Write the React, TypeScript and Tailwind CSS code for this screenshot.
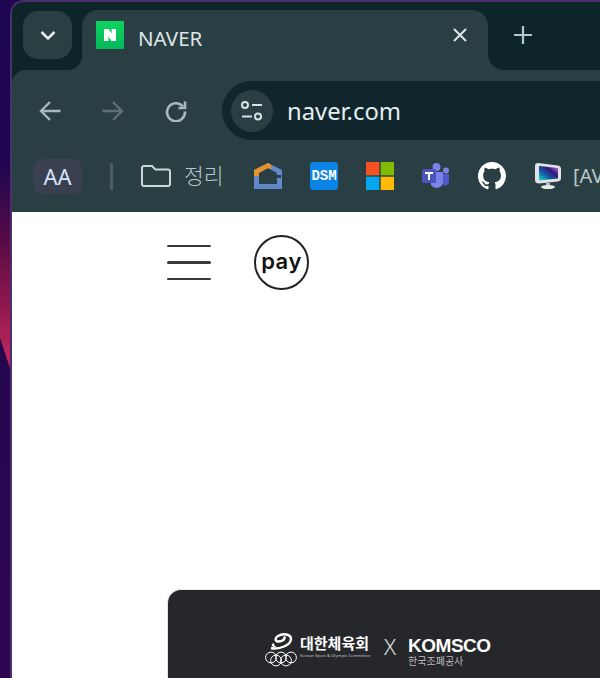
import React from "react";

const sans = "font-['Noto_Sans','Noto_Sans_CJK_KR',sans-serif]";

function Wallpaper() {
  return (
    <svg width="10" height="678" viewBox="0 0 10 678" className="block shrink-0">
      <defs>
        <linearGradient id="wp" gradientUnits="userSpaceOnUse" x1="0" y1="170" x2="0" y2="368">
          <stop offset="0" stopColor="#22084e" />
          <stop offset="0.35" stopColor="#560a46" />
          <stop offset="0.7" stopColor="#92194f" />
          <stop offset="1" stopColor="#c42a5e" />
        </linearGradient>
        <linearGradient id="wb" x1="0" y1="0" x2="0" y2="1">
          <stop offset="0" stopColor="#1c0650" />
          <stop offset="1" stopColor="#2e064e" />
        </linearGradient>
      </defs>
      <rect width="10" height="678" fill="url(#wb)" />
      <polygon points="0,170 10,170 10,368 0,338" fill="url(#wp)" />
    </svg>
  );
}

function NaverIcon() {
  return (
    <svg width="28" height="28" viewBox="0 0 28 28" className="shrink-0">
      <defs>
        <linearGradient id="nv" x1="0" y1="0" x2="0" y2="1">
          <stop offset="0" stopColor="#0fd35f" />
          <stop offset="1" stopColor="#03b85a" />
        </linearGradient>
      </defs>
      <rect width="28" height="28" fill="url(#nv)" />
      <path d="M8 8h4.600l3 4.600V8H20v12h-4.600l-3-4.600V20H8z" fill="#fff" />
    </svg>
  );
}

function House() {
  return (
    <svg width="28" height="26" viewBox="0 0 28 26" className="shrink-0">
      <path fillRule="evenodd" d="M0 7L14 0l14 7v19H0zM5 10v11h18V10l-9-5z" fill="#6189c9" />
      <path d="M0 7L14 0l3 1.500v5L14 5 5 10v3H0z" fill="#e8912c" />
      <rect x="22" y="12" width="5" height="3" fill="#2a3f44" />
    </svg>
  );
}

function Dsm() {
  return (
    <div className="flex h-7 w-7 shrink-0 items-center justify-center rounded-[3px] bg-[#0b84e6] font-['Liberation_Mono',monospace] text-[14px] font-bold leading-none text-white">
      DSM
    </div>
  );
}

function Ms() {
  return (
    <svg width="28" height="28" viewBox="0 0 28 28" className="shrink-0">
      <rect width="13.300" height="13.300" fill="#f25325" />
      <rect x="14.700" width="13.300" height="13.300" fill="#80bb03" />
      <rect y="14.700" width="13.300" height="13.300" fill="#04a6f0" />
      <rect x="14.700" y="14.700" width="13.300" height="13.300" fill="#ffba07" />
    </svg>
  );
}

function Teams() {
  return (
    <svg width="28" height="26" viewBox="0 0 28 26" className="shrink-0">
      <circle cx="24" cy="7.500" r="3" fill="#7b83eb" />
      <path d="M20 11h7v8a4 4 0 0 1-6 3z" fill="#5059c9" />
      <circle cx="14.500" cy="4" r="4" fill="#7b83eb" />
      <path d="M9 9h12v10a6.500 6.500 0 0 1-12 3z" fill="#7b83eb" />
      <rect y="6" width="14" height="14" rx="1.500" fill="#4b53bc" />
      <path d="M3 9h8v2H8v6H6v-6H3z" fill="#fff" />
    </svg>
  );
}

function GitHub() {
  return (
    <svg width="28" height="28" viewBox="0 0 16 16" className="shrink-0" fill="#fff">
      <path d="M8 0C3.580 0 0 3.580 0 8c0 3.540 2.290 6.530 5.470 7.590.4.070.55-.17.55-.38 0-.19-.01-.82-.01-1.490-2.010.37-2.530-.49-2.690-.94-.09-.23-.48-.94-.82-1.130-.28-.15-.68-.52-.01-.53.63-.01 1.080.58 1.230.82.72 1.210 1.870.87 2.330.66.07-.52.28-.87.51-1.070-1.780-.2-3.640-.89-3.640-3.950 0-.87.31-1.590.82-2.150-.08-.2-.36-1.020.08-2.120 0 0 .67-.21 2.200.82.64-.18 1.320-.27 2-.27s1.360.09 2 .27c1.530-1.040 2.200-.82 2.200-.82.44 1.100.16 1.920.08 2.120.51.56.82 1.270.82 2.150 0 3.070-1.870 3.750-3.650 3.950.29.25.54.73.54 1.480 0 1.070-.01 1.930-.01 2.200 0 .21.15.46.55.38A8.010 8.010 0 0 0 16 8c0-4.420-3.580-8-8-8z" />
    </svg>
  );
}

function Monitor() {
  return (
    <svg width="26" height="26" viewBox="0 0 26 26" className="shrink-0">
      <defs>
        <linearGradient id="scr" x1="0" y1="1" x2="1" y2="0">
          <stop offset="0" stopColor="#12e8d0" />
          <stop offset="0.35" stopColor="#1860a8" />
          <stop offset="0.65" stopColor="#2a1a78" />
          <stop offset="1" stopColor="#e070e0" />
        </linearGradient>
      </defs>
      <path d="M3 0L23 2.500Q26 3 26 6V15Q26 18 23 18.500L4 20.500Q0 20.500 0 17V3Q0 0 3 0z" fill="#dfe3e3" />
      <path d="M4 3L23 5V15.500L4 17.500z" fill="url(#scr)" />
      <path d="M11 20h4v3h-4z" fill="#b8bebe" />
      <ellipse cx="13" cy="24" rx="7" ry="2" fill="#e6e8e8" />
    </svg>
  );
}

function KsocLogo() {
  return (
    <svg width="34" height="34" viewBox="0 0 34 34" className="shrink-0">
      <path d="M6 15C14 17 26 12 26 6C26 1 18 0 13 3C9.500 5 10 8.500 13.500 8.500C17 8.500 21 6 19 3.500" fill="none" stroke="#fff" strokeWidth="2.400" />
      <path d="M7 11C6 13 8 14.500 12 14C10 13.500 9 12.500 9 10z" fill="#fff" />
      <g fill="none" stroke="#fff" strokeWidth="1">
        <circle cx="6" cy="24.500" r="5.400" />
        <circle cx="16" cy="24.500" r="5.400" />
        <circle cx="26" cy="24.500" r="5.400" />
        <circle cx="11" cy="27.500" r="5.400" />
        <circle cx="21" cy="27.500" r="5.400" />
      </g>
    </svg>
  );
}

export default function App() {
  return (
    <div className={`flex h-[678px] w-[600px] overflow-hidden bg-[#260650] ${sans}`}>
      <Wallpaper />
      <div className="flex min-w-0 flex-1 flex-col overflow-hidden rounded-tl-[14px] border-l-2 border-t-2 border-[#4c2f6f] bg-[#0d2529]">
        {/* Tab strip */}
        <div className="flex h-[68px] shrink-0 bg-[linear-gradient(#0d2529_50%,#2a3f44_50%)]">
          <div className="flex h-full w-[70px] shrink-0 items-start rounded-br-[14px] bg-[#0d2529] pl-[11px] pt-[9px]">
            <div className="flex h-[48px] w-[49px] items-center justify-center rounded-[15px] bg-[#2a3f44]">
              <svg width="16" height="11" viewBox="0 0 16 11" fill="none" stroke="#e4eaec" strokeWidth="2.600">
                <path d="M1.500 2l6.500 6.500L14.500 2" />
              </svg>
            </div>
          </div>
          <div className="mt-2 flex h-[60px] w-[406px] shrink-0 items-start rounded-t-[16px] bg-[#2a3f44] pl-[14px] pt-[11px]">
            <NaverIcon />
            <span className="ml-[14px] mt-[3px] w-[65px] shrink-0 text-[20.500px] leading-[28px] text-[#dfe6e8]">NAVER</span>
            <svg width="14" height="14" viewBox="0 0 14 14" stroke="#dfe6e8" strokeWidth="2" className="ml-[250px] mt-[7px] shrink-0">
              <path d="M1 1l12 12M13 1L1 13" />
            </svg>
          </div>
          <div className="flex h-full flex-1 items-start rounded-bl-[16px] bg-[#0d2529] pl-[26px] pt-[24px]">
            <svg width="18" height="18" viewBox="0 0 18 18" stroke="#b6c6ca" strokeWidth="2.200">
              <path d="M9 0v18M0 9h18" />
            </svg>
          </div>
        </div>

        {/* Toolbar */}
        <div className="flex h-[142px] shrink-0 flex-col rounded-tl-[14px] bg-[#2a3f44]">
          <div className="flex h-[80px] shrink-0 items-start pt-[11px]">
            <div className="flex h-[59px] shrink-0 items-center">
              <svg width="22" height="22" viewBox="0 0 22 22" fill="none" stroke="#a6babe" strokeWidth="2.400" className="ml-[27px]">
                <path d="M21.500 11H2.500M11 2L2 11l9 9" />
              </svg>
              <svg width="22" height="22" viewBox="0 0 22 22" fill="none" stroke="#5f7176" strokeWidth="2.400" className="ml-[41px]">
                <path d="M.5 11H19.500M11 2l9 9-9 9" />
              </svg>
              <svg width="22" height="22" viewBox="0 0 22 22" fill="none" stroke="#a6babe" strokeWidth="2.600" className="ml-[41px]">
                <path d="M18 6.500A9 9 0 1 0 20 11.500" />
                <path d="M20 1.500v6.500h-6.500" />
              </svg>
            </div>
            <div className="ml-[35px] flex h-[59px] flex-1 items-center rounded-l-[30px] bg-[#10262c] pl-[9px]">
              <div className="flex h-[42px] w-[42px] shrink-0 items-center justify-center rounded-full bg-[#2a3f44]">
                <svg width="22" height="20" viewBox="0 0 22 20" fill="none" stroke="#d8e2e4" strokeWidth="2">
                  <circle cx="4" cy="4" r="3" />
                  <path d="M11 4h10M1 15.500h10" />
                  <circle cx="17" cy="15.500" r="3" />
                </svg>
              </div>
              <span className="ml-[14px] text-[23.800px] leading-8 text-[#e4eef0]">naver.com</span>
            </div>
          </div>
          <div className="flex h-[62px] items-center pb-[10px]">
            <div className="ml-[21px] flex h-[35px] w-[49px] shrink-0 items-center justify-center rounded-[10px] bg-[#3a4050] text-[22px] text-[#d6e4fc]">
              AA
            </div>
            <div className="ml-[28px] h-[27px] w-[3px] shrink-0 bg-[#4a5d62]" />
            <svg width="30" height="22" viewBox="0 0 30 22" fill="none" stroke="#cdd6d8" strokeWidth="2" className="ml-[28px] shrink-0">
              <path d="M3 1h8l3.500 3.500H27a2 2 0 0 1 2 2V19a2 2 0 0 1-2 2H3a2 2 0 0 1-2-2V3a2 2 0 0 1 2-2z" />
            </svg>
            <span className="ml-[13px] w-[40px] shrink-0 whitespace-nowrap text-[21.500px] font-light leading-7 text-[#b9c7ca]">정리</span>
            <div className="ml-[30px] flex shrink-0"><House /></div>
            <div className="ml-[28px] flex shrink-0"><Dsm /></div>
            <div className="ml-[28px] flex shrink-0"><Ms /></div>
            <div className="ml-[28px] flex shrink-0"><Teams /></div>
            <div className="ml-[28px] flex shrink-0"><GitHub /></div>
            <div className="ml-[29px] flex shrink-0"><Monitor /></div>
            <span className="ml-3 shrink-0 text-[20px] text-[#b9c7ca]">[AV</span>
          </div>
        </div>

        {/* Page */}
        <div className="flex min-h-0 flex-1 flex-col bg-white pl-[155px]">
          <div className="flex h-[377px] shrink-0 items-start pt-6">
            <div className="mt-[9px] flex h-[35px] w-[44px] shrink-0 flex-col justify-between">
              <div className="h-[2px] rounded-full bg-[#3a3a3a]" />
              <div className="h-[3px] rounded-full bg-[#3a3a3a]" />
              <div className="h-[2px] rounded-full bg-[#3a3a3a]" />
            </div>
            <div className="ml-[43px] -mt-px flex h-[55px] w-[55px] shrink-0 items-center justify-center rounded-full border-2 border-[#222] font-['Inter',sans-serif] text-[22px] font-semibold leading-none tracking-[0.5px] text-[#111]">
              <span className="-mt-1">pay</span>
            </div>
          </div>
          <div className="flex flex-1 items-start rounded-tl-[14px] border-l border-t border-[#e6e6e6] bg-[#26272b] pl-[97px] pt-[43px]">
            <div className="flex items-start">
              <KsocLogo />
              <div className="ml-[1px] flex flex-col">
                <span className="text-[15px] font-bold leading-[20px] text-white">대한체육회</span>
                <span className="whitespace-nowrap text-[4.200px] leading-[6px] text-[#c8c8c8]">Korean Sport &amp; Olympic Committee</span>
              </div>
              <span className="ml-[14px] mt-[1px] text-[22px] font-light leading-6 text-[#e0e0e0]">X</span>
              <div className="ml-[12px] mt-[4px] flex flex-col">
                <span className="font-['Liberation_Sans',sans-serif] text-[19px] font-bold leading-[18px] tracking-[-0.5px] text-white">KOMSCO</span>
                <span className="whitespace-nowrap text-[10px] leading-[13px] text-[#bbb]">한국조폐공사</span>
              </div>
            </div>
          </div>
        </div>
      </div>
    </div>
  );
}
